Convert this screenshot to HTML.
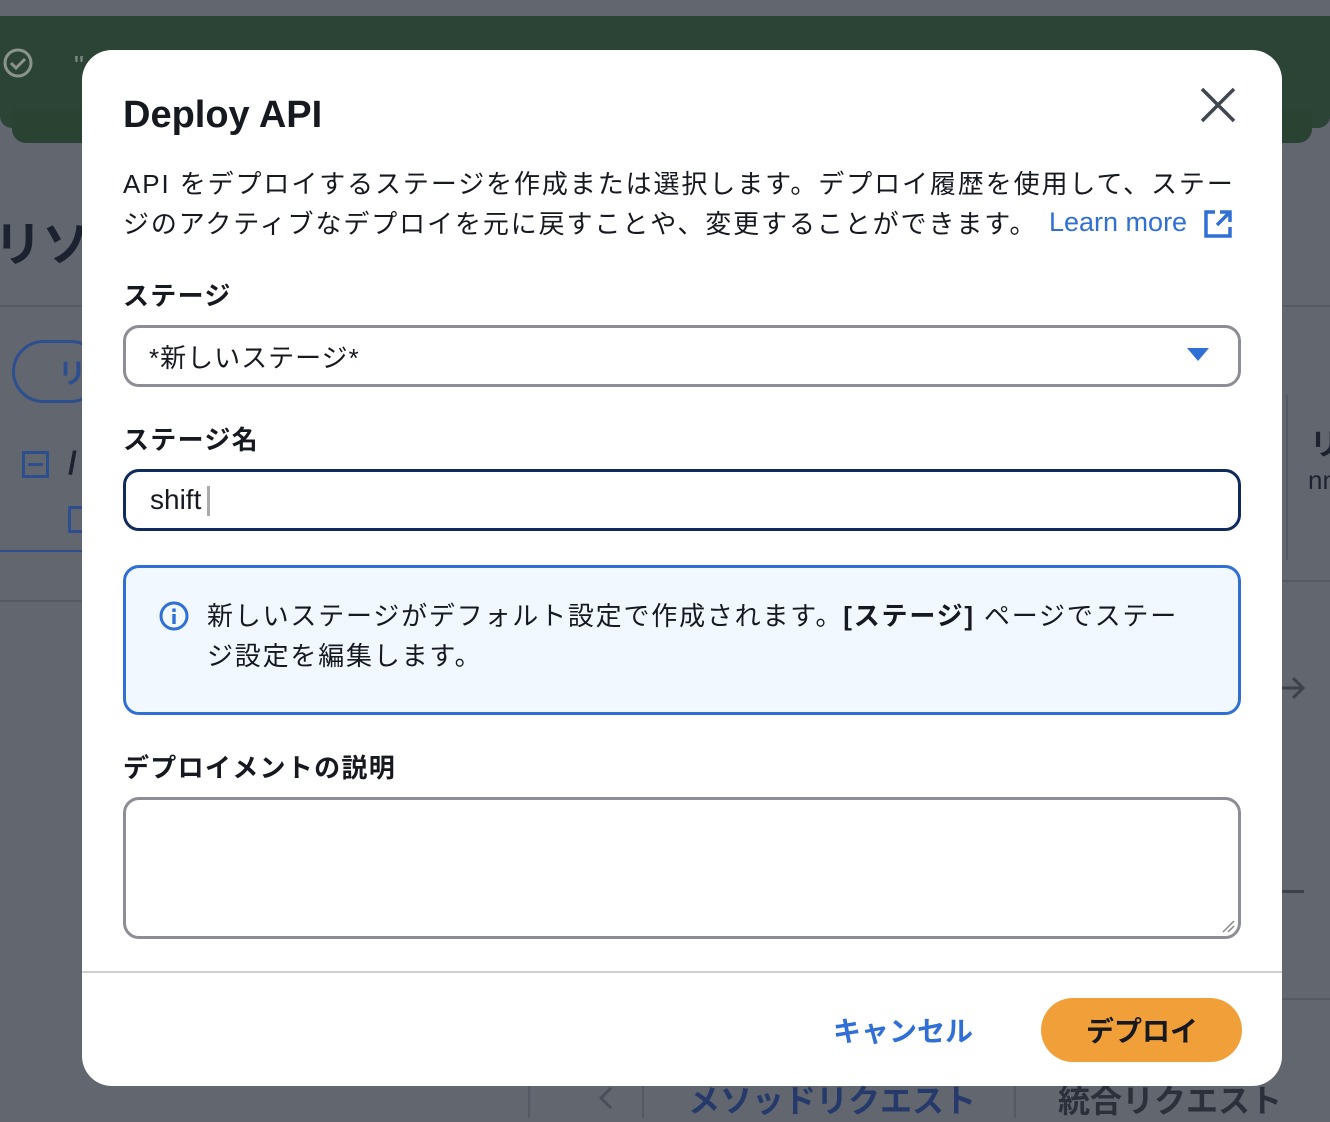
<!DOCTYPE html>
<html><head><meta charset="utf-8"><style>
*{box-sizing:border-box;margin:0;padding:0}
body{width:1330px;height:1118px;overflow:hidden;background:#62666f;font-family:"Liberation Sans","Noto Sans CJK JP",sans-serif;position:relative;color:#16191f}
.abs{position:absolute;white-space:nowrap}
.green{position:absolute;left:0;top:16px;width:1330px;height:112px;background:#2c4436;border-radius:0 0 12px 12px}
.green2{position:absolute;left:12px;top:110px;width:1300px;height:33px;background:#2a4232;border-radius:0 0 14px 14px}
.modal{position:absolute;left:82px;top:50px;width:1200px;height:1036px;background:#fff;border-radius:30px}
.lbl{font-size:26px;font-weight:bold;letter-spacing:1.3px}
.box{position:absolute;left:41px;width:1118px;border-radius:16px;background:#fff}
.t{font-size:26px;letter-spacing:1.9px;color:#16191f}
</style></head><body>
<div class="green"></div><div class="green2"></div>
<svg class="abs" style="left:2px;top:47px" width="32" height="32" viewBox="0 0 32 32"><circle cx="16" cy="16" r="13" fill="none" stroke="#8a948d" stroke-width="3"/><path d="M9 16l5 5 9-9" fill="none" stroke="#8a948d" stroke-width="3"/></svg>
<div class="abs" style="left:74px;top:44px;font-size:28px;color:#7f8a84">" に</div>
<div class="abs" style="left:-6px;top:205px;font-size:48px;font-weight:bold;color:#1d2230">リソー</div>
<div class="abs" style="left:0;top:305px;width:82px;height:2px;background:#545963"></div>
<div class="abs" style="left:12px;top:340px;width:90px;height:63px;border:3px solid #2d4f8f;border-radius:32px"></div>
<div class="abs" style="left:58px;top:352px;font-size:28px;font-weight:bold;color:#2d4f8f">リ</div>
<div class="abs" style="left:22px;top:451px;width:27px;height:27px;border:3px solid #2d4f8f"></div>
<div class="abs" style="left:28px;top:463px;width:15px;height:3px;background:#2d4f8f"></div>
<div class="abs" style="left:68px;top:445px;font-size:32px;font-weight:bold;color:#1d2230">/</div>
<div class="abs" style="left:68px;top:506px;width:20px;height:27px;border:3px solid #2d4f8f;border-right:none"></div>
<div class="abs" style="left:0;top:550px;width:82px;height:2px;background:#2d4f8f"></div>
<div class="abs" style="left:0;top:600px;width:82px;height:2px;background:#545963"></div>
<div class="abs" style="left:1282px;top:305px;width:48px;height:2px;background:#545963"></div>
<div class="abs" style="left:1286px;top:395px;width:2px;height:165px;background:#545963"></div>
<div class="abs" style="left:1310px;top:420px;font-size:30px;font-weight:bold;color:#1d2230">リ</div>
<div class="abs" style="left:1308px;top:465px;font-size:26px;color:#1d2230">nn</div>
<div class="abs" style="left:1282px;top:580px;width:48px;height:2px;background:#545963"></div>
<svg class="abs" style="left:1280px;top:676px" width="26" height="24" viewBox="0 0 26 24"><path d="M1 12h22M13 2l10 10-10 10" fill="none" stroke="#3c414c" stroke-width="3"/></svg>
<div class="abs" style="left:1282px;top:890px;width:22px;height:3px;background:#3c414c"></div>
<div class="abs" style="left:1282px;top:998px;width:48px;height:2px;background:#545963"></div>
<div class="abs" style="left:528px;top:1086px;width:2px;height:32px;background:#545963"></div>
<div class="abs" style="left:642px;top:1086px;width:2px;height:32px;background:#545963"></div>
<div class="abs" style="left:1014px;top:1086px;width:2px;height:32px;background:#545963"></div>
<svg class="abs" style="left:598px;top:1086px" width="16" height="24" viewBox="0 0 16 24"><path d="M13 2L3 12l10 10" fill="none" stroke="#4a4f5a" stroke-width="3"/></svg>
<div class="abs" style="left:688px;top:1076px;font-size:32px;font-weight:bold;color:#26396b">メソッドリクエスト</div>
<div class="abs" style="left:1058px;top:1076px;font-size:32px;font-weight:bold;color:#2b303b">統合リクエスト</div>

<div class="modal">
<div class="abs" style="left:41px;top:44px;font-size:38px;font-weight:bold">Deploy API</div>
<svg class="abs" style="left:1117px;top:36px" width="38" height="38" viewBox="0 0 38 38"><path d="M3 3L35 35M35 3L3 35" stroke="#414750" stroke-width="3.5"/></svg>
<div class="abs t" style="left:41px;top:114px">API をデプロイするステージを作成または選択します。デプロイ履歴を使用して、ステー</div>
<div class="abs t" style="left:41px;top:154px">ジのアクティブなデプロイを元に戻すことや、変更することができます。</div>
<div class="abs" style="left:967px;top:157px;font-size:27px;color:#2f6fd6">Learn more</div>
<svg class="abs" style="left:1122px;top:160px" width="28" height="28" viewBox="0 0 28 28"><path d="M11 2H2v24h24v-9" fill="none" stroke="#2f6fd6" stroke-width="3.5"/><path d="M16 2h10v10M26 2L13 15" fill="none" stroke="#2f6fd6" stroke-width="3.5"/></svg>
<div class="abs lbl" style="left:41px;top:226px">ステージ</div>
<div class="box" style="top:275px;height:62px;border:3px solid #8d8d95"></div>
<div class="abs t" style="left:67px;top:288px;letter-spacing:1px">*新しいステージ*</div>
<svg class="abs" style="left:1104px;top:297px" width="24" height="16" viewBox="0 0 24 16"><path d="M1 1h22L12 14z" fill="#2f6fd6"/></svg>
<div class="abs lbl" style="left:41px;top:370px">ステージ名</div>
<div class="box" style="top:419px;height:62px;border:3px solid #0f2a5c"></div>
<div class="abs" style="left:68px;top:434px;font-size:28px">shift</div>
<div class="abs" style="left:125px;top:436px;width:3px;height:30px;background:#aaa"></div>
<div class="box" style="top:515px;height:150px;border:3px solid #2f6fd6;background:#f1f8ff"></div>
<svg class="abs" style="left:76px;top:550px" width="32" height="32" viewBox="0 0 32 32"><circle cx="16" cy="16" r="13" fill="none" stroke="#2f6fd6" stroke-width="3"/><rect x="14.3" y="14" width="3.4" height="10" fill="#2f6fd6"/><rect x="14.3" y="8.5" width="3.4" height="3.4" fill="#2f6fd6"/></svg>
<div class="abs t" style="left:125px;top:546px;letter-spacing:1.8px">新しいステージがデフォルト設定で作成されます。<b>[ステージ]</b> ページでステー</div>
<div class="abs t" style="left:125px;top:586px;letter-spacing:1.8px">ジ設定を編集します。</div>
<div class="abs lbl" style="left:41px;top:698px">デプロイメントの説明</div>
<div class="box" style="top:747px;height:142px;border:3px solid #8d8d95"></div>
<svg class="abs" style="left:1139px;top:869px" width="14" height="14" viewBox="0 0 14 14"><path d="M13 2L2 13M13 7L7 13" stroke="#888" stroke-width="1.5"/></svg>
<div class="abs" style="left:0;top:921px;width:1200px;height:2px;background:#cfcfd4"></div>
<div class="abs" style="left:751px;top:960px;font-size:28px;font-weight:bold;color:#2f6fd6">キャンセル</div>
<div class="abs" style="left:959px;top:948px;width:201px;height:64px;border-radius:32px;background:#f19f38"></div>
<div class="abs" style="left:1004px;top:960px;font-size:28px;font-weight:bold;color:#16191f">デプロイ</div>
</div>
</body></html>
